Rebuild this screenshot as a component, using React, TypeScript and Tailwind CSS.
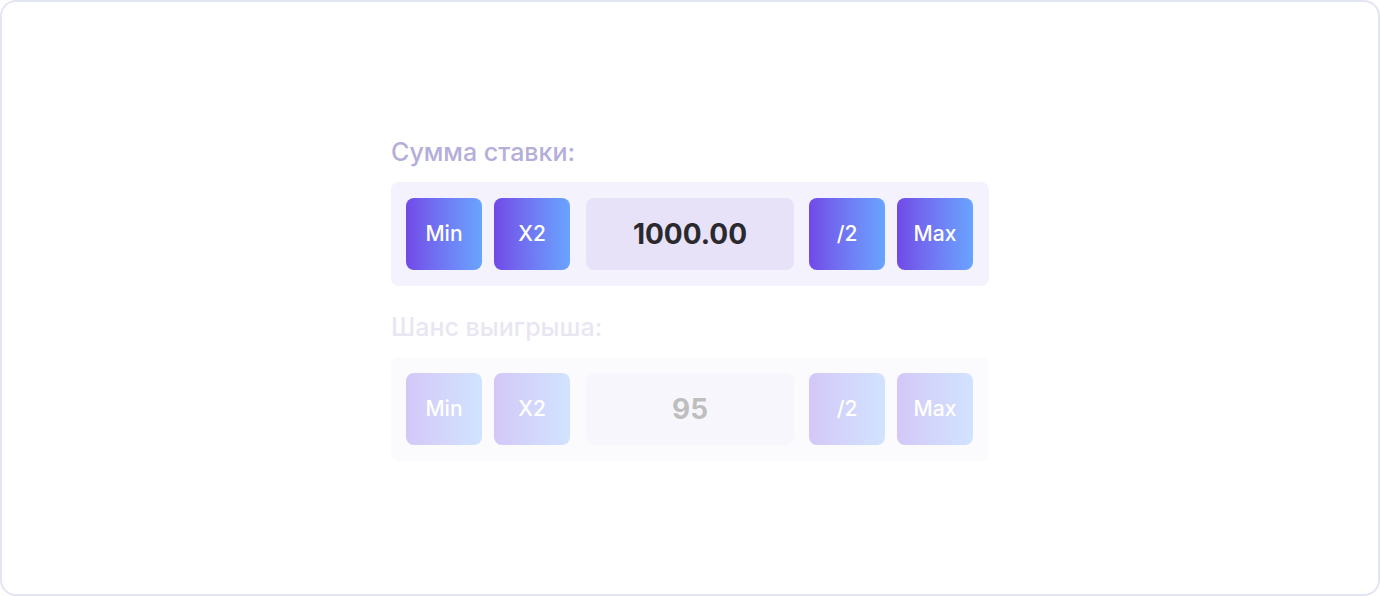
const buttonsLeft = ["Min", "X2"];
const buttonsRight = ["/2", "Max"];

function StepButton({ label }: { label: string }) {
  return (
    <button className="flex h-[72px] w-[76px] items-center justify-center rounded-lg bg-gradient-to-r from-[#7149e7] to-[#68a4ff] text-[21px] font-medium text-white">
      {label}
    </button>
  );
}

function AmountField({ title, value, dim }: { title: string; value: string; dim?: boolean }) {
  return (
    <div className={dim ? "opacity-30" : ""}>
      <div className="mb-[14px] text-[25px] font-medium leading-8 text-[#b5aed9]">{title}</div>
      <div className="flex items-center gap-3 rounded-lg bg-[#f4f2fd] py-4 pl-[15px] pr-4">
        {buttonsLeft.map((b) => (
          <StepButton key={b} label={b} />
        ))}
        <div className="ml-1 mr-[3px] flex h-[72px] w-[208px] items-center justify-center rounded-lg bg-[#e8e2f8] text-[28px] font-bold text-[#2a2a2e]">
          {value}
        </div>
        {buttonsRight.map((b) => (
          <StepButton key={b} label={b} />
        ))}
      </div>
    </div>
  );
}

export default function App() {
  return (
    <div
      className="flex h-[596px] w-[1380px] items-center justify-center rounded-2xl border-2 border-[#e4e5f2] bg-white"
      style={{ fontFamily: "Inter, 'Noto Sans', sans-serif" }}
    >
      <div className="flex w-[598px] flex-col gap-[25px]">
        <AmountField title="Сумма ставки:" value="1000.00" />
        <AmountField title="Шанс выигрыша:" value="95" dim />
      </div>
    </div>
  );
}
